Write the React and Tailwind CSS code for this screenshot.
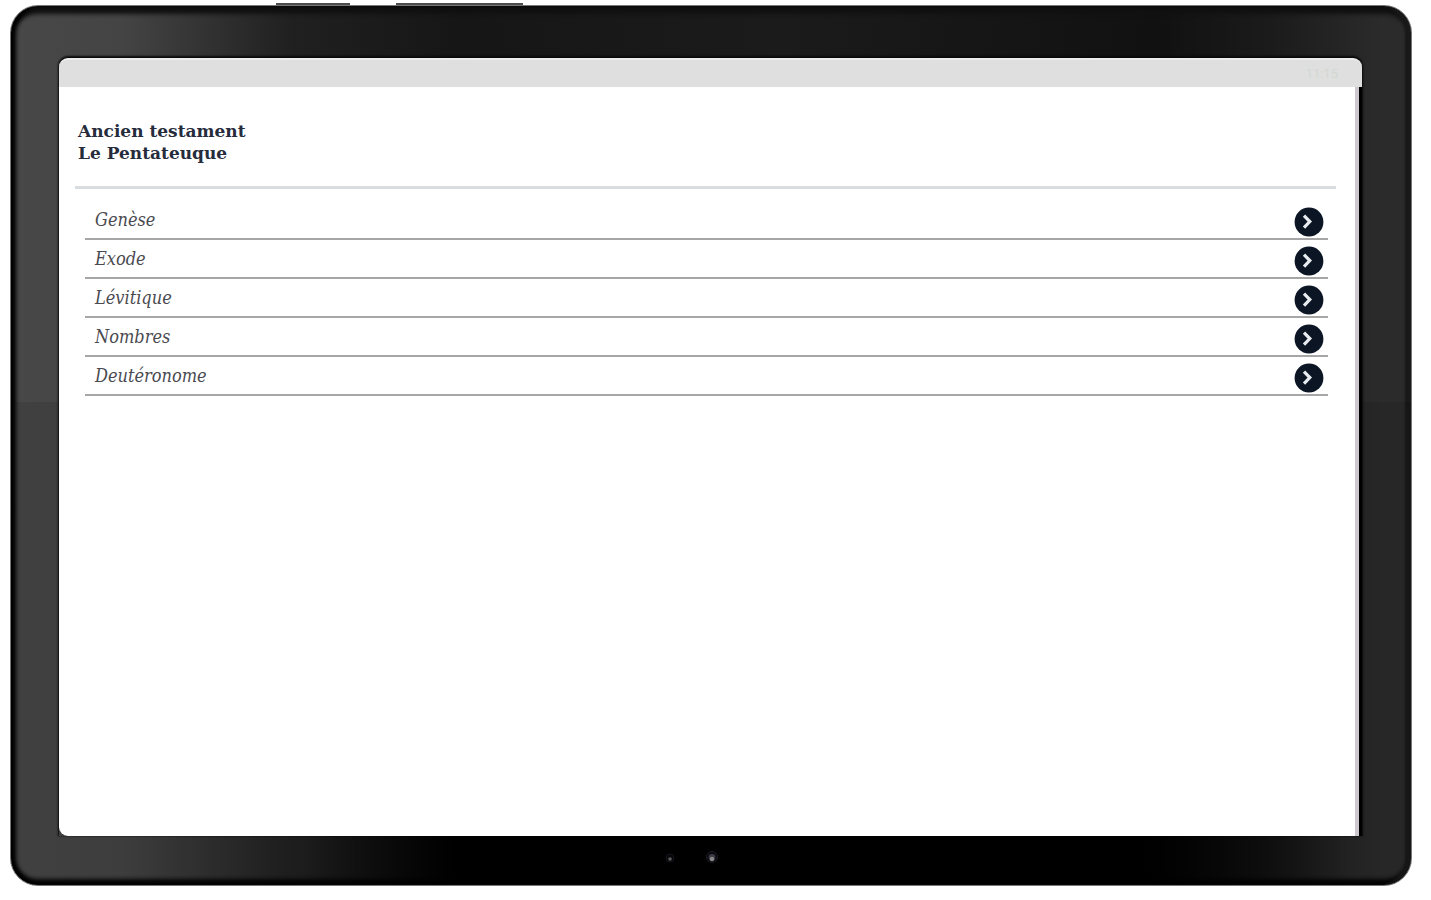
import React from "react";

const books = ["Genèse", "Exode", "Lévitique", "Nombres", "Deutéronome"];

function ArrowIcon() {
  return (
    <svg viewBox="0 0 30 30" className="w-[30px] h-[30px]" aria-hidden="true">
      <circle cx="15" cy="15" r="14.4" fill="#0b1524" />
      <path
        d="M10 8.6 L15.8 14.6 L10 20.6"
        fill="none"
        stroke="#e8ecf0"
        strokeWidth="3.2"
      />
    </svg>
  );
}

function BookRow({ name }) {
  return (
    <li className="border-b-2 border-[#a6a6a6]">
      <button
        type="button"
        className="w-full h-[37px] flex items-center justify-between pl-[10px] pr-1 text-left cursor-pointer"
      >
        <span className="italic text-[18px] leading-6 text-[#4a4a50]">
          {name}
        </span>
        <span className="pt-[5px]">
          <ArrowIcon />
        </span>
      </button>
    </li>
  );
}

function StatusBar() {
  return (
    <div className="h-[29px] shrink-0 bg-[#dfdfdf] border-t-2 border-[#ececec] rounded-t-[9px] flex items-center justify-end pr-6">
      <time className="font-['Roboto',sans-serif] text-[13px] leading-4 text-[#d2d8d2]">
        11:15
      </time>
    </div>
  );
}

function Screen() {
  return (
    <div className="flex-1 flex flex-col rounded-t-[9px] shadow-[0_-1px_2px_1px_#0a0a0a]">
      <StatusBar />
      <main className="flex-1 mr-[3px] bg-white border-r-4 border-[#cdc8ce] rounded-bl-[9px] shadow-[3px_0_0_#000] pl-4 pr-[19px] font-['DejaVu_Serif_Condensed','DejaVu_Serif',serif]">
        <h1 className="pt-[33px] pb-[22px] pl-[3px] font-['DejaVu_Serif',serif] font-bold text-[17px] leading-[22px] text-[#262c3c]">
          Ancien testament
          <br />
          Le Pentateuque
        </h1>
        <div className="h-[3px] bg-[#d9dddf]" />
        <ul className="pt-3 pl-[10px] pr-2">
          {books.map((name) => (
            <BookRow key={name} name={name} />
          ))}
        </ul>
      </main>
    </div>
  );
}

function Cameras() {
  return (
    <div className="h-[48px] shrink-0 flex items-center justify-center gap-[26px] pr-10 pb-1">
      <svg viewBox="0 0 16 16" className="w-4 h-4" aria-hidden="true">
        <circle cx="8" cy="8" r="4" fill="#07070b" stroke="#15151a" />
        <circle cx="8" cy="9" r="1.8" fill="#5c5c5c" />
      </svg>
      <svg viewBox="0 0 16 16" className="w-4 h-4" aria-hidden="true">
        <circle cx="8" cy="7" r="5.5" fill="#090910" stroke="#1b1b22" />
        <circle cx="8" cy="7.5" r="3.4" fill="#3c3c42" />
        <circle cx="8" cy="9" r="2.2" fill="#8a8a8a" />
      </svg>
    </div>
  );
}

export default function App() {
  return (
    <div className="min-h-screen bg-white flex flex-col pt-[3px] pr-[19px] pb-[14px] pl-[10px]">
      {/* Side buttons */}
      <div className="h-[2px] shrink-0 flex gap-[46px] pl-[266px]">
        <div className="w-[74px] bg-[#4c4c4c]" />
        <div className="w-[127px] bg-[#4c4c4c]" />
      </div>

      {/* Tablet body */}
      <div className="flex-1 flex flex-col rounded-[28px] border border-[#777] bg-[linear-gradient(90deg,#484848_0%,#444444_8%,#202020_20%,#161616_32%,#1b1b1b_55%,#111111_82%,#1b1b1b_90%,#2b2b2b_98%)] shadow-[inset_5px_0_4px_#000,inset_-6px_0_2px_#191919,inset_0_8px_4px_#111,inset_0_-6px_4px_#050505]">
        <div className="flex-1 flex flex-col rounded-[27px] bg-[linear-gradient(180deg,transparent_45%,rgba(0,0,0,0.1)_45%)]">
          <div className="flex-1 flex flex-col pt-[52px] pl-12 pr-[49px]">
            <Screen />
          </div>
          <div className="mx-5 mb-[1px] bg-[linear-gradient(90deg,transparent_20%,#000_31%,#000_82%,transparent_97%)]">
            <Cameras />
          </div>
        </div>
      </div>
    </div>
  );
}
